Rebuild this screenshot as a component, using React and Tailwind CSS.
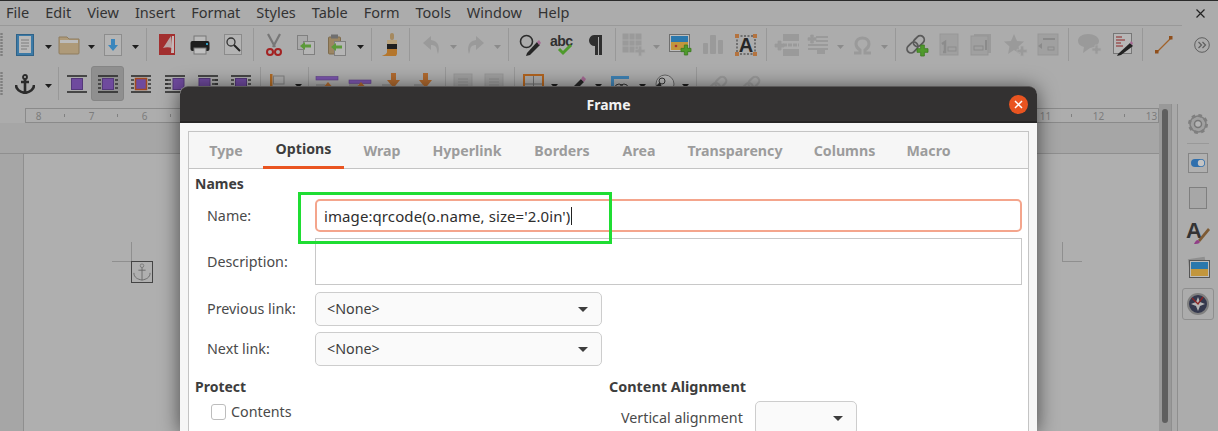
const menus = ["File", "Edit", "View", "Insert", "Format", "Styles", "Table", "Form", "Tools", "Window", "Help"];
// the middle of the ruler sits behind the dialog
const rulerNums = [8, 7, 6, "", "", "", "", "", "", "", "", "", "", "", "", "", "", "", "", 11, 12, 13];
const tabs = [
  { label: "Type", w: "w-[58px]" },
  { label: "Options", w: "w-[81px]", active: true },
  { label: "Wrap", w: "w-[60px]" },
  { label: "Hyperlink", w: "w-[94px]" },
  { label: "Borders", w: "w-[80px]" },
  { label: "Area", w: "w-[58px]" },
  { label: "Transparency", w: "w-[118px]" },
  { label: "Columns", w: "w-[85px]" },
  { label: "Macro", w: "w-[67px]" },
];

const G = "#9a9a9a"; // disabled icon grey

function Ico({ w = 24, h = 24, children }) {
  return (
    <svg width={w} height={h} viewBox={`0 0 ${w} ${h}`} className="block shrink-0 overflow-visible">
      {children}
    </svg>
  );
}

function Slot({ w, children, className = "" }) {
  return <div className={`${w} h-full shrink-0 flex items-center justify-center ${className}`}>{children}</div>;
}

function Arrow({ w, off }) {
  return (
    <Slot w={w} className="pt-[4px]">
      <Ico w={7} h={4}>
        <path d="M0 0h7L3.500 4z" fill={off ? "#8b8b8b" : "#1d1d1d"} />
      </Ico>
    </Slot>
  );
}

function Sep({ w, h = "h-[33px]" }) {
  return (
    <Slot w={w}>
      <div className={`w-px ${h} bg-[#989898]`} />
    </Slot>
  );
}

function Grip() {
  return (
    <div className="w-[9px] h-full shrink-0 flex items-center">
      <Ico w={3} h={24}>
        <line x1="1.500" y1="0" x2="1.500" y2="24" stroke="#7f7f7f" strokeWidth="2.400" strokeDasharray="2 1" />
      </Ico>
    </div>
  );
}

function Plus({ x, y, s = 9, c = "#4f9a2c", b = "#3b7a20" }) {
  const t = s / 3;
  const d = `M${x + t} ${y}h${t}v${t}h${t}v${t}h${-t}v${t}h${-t}v${-t}h${-t}v${-t}h${t}z`;
  return <path d={d} fill={c} stroke={b} strokeWidth="0.800" />;
}

function Chain({ c, sw = 1.800 }) {
  return (
    <g transform="rotate(-45 10 11)" fill="none" stroke={c} strokeWidth={sw}>
      <rect x="-1" y="7" width="12" height="8" rx="4" />
      <rect x="8" y="7" width="12" height="8" rx="4" />
    </g>
  );
}

const NewDoc = () => (
  <Ico w={18} h={22}>
    <rect x="0.500" y="0.500" width="17" height="21" fill="#3c7aa6" stroke="#2f6288" />
    <rect x="3" y="2" width="12" height="17" fill="#b9b9b9" />
    <path d="M5 6h8M5 9h8M5 12h8M5 15h6" stroke="#7d7d7d" />
  </Ico>
);
const Folder = () => (
  <Ico w={22} h={21}>
    <path d="M1 3h8l2 2h10v14a1 1 0 0 1-1 1H2a1 1 0 0 1-1-1z" fill="#ae9a79" stroke="#8f7d5f" />
    <path d="M2 6h18v3H2z" fill="#bcbcbc" />
  </Ico>
);
const Save = () => (
  <Ico w={18} h={22}>
    <rect x="0.500" y="0.500" width="17" height="21" fill="#b4b4b4" stroke="#8d8d8d" />
    <path d="M7 5h4v6h3l-5 6-5-6h3z" fill="#3b86bc" />
  </Ico>
);
const Pdf = () => (
  <Ico w={16} h={21}>
    <rect width="16" height="21" fill="#a22f2f" />
    <path d="M12 2c-3 4-5 8-8 12 3-1 6-1 9 0z" fill="#b9a5a5" />
    <path d="M13 2h2v17h-3z" fill="#c4b8b8" />
  </Ico>
);
const Printer = () => (
  <Ico w={20} h={20}>
    <rect x="4" y="1" width="12" height="8" fill="#b9b9b9" stroke="#777" />
    <rect x="0.500" y="6" width="19" height="10" rx="2" fill="#1f1f1f" />
    <rect x="16" y="8" width="2" height="2" fill="#2e9bc0" />
    <rect x="4" y="13" width="12" height="6" fill="#c0c0c0" stroke="#777" />
  </Ico>
);
const Preview = () => (
  <Ico w={18} h={21}>
    <rect x="0.500" y="0.500" width="17" height="20" fill="#b3b3b3" stroke="#8b8b8b" />
    <circle cx="7" cy="8" r="4" fill="none" stroke="#333" strokeWidth="1.300" />
    <path d="M10 11l6 6" stroke="#222" strokeWidth="2" />
  </Ico>
);
const Cut = () => (
  <Ico w={16} h={22}>
    <path d="M2 0l7 13M14 0L7 13" stroke="#777" strokeWidth="2.200" />
    <circle cx="4" cy="18" r="3" fill="none" stroke="#a32222" strokeWidth="2" />
    <circle cx="12" cy="18" r="3" fill="none" stroke="#a32222" strokeWidth="2" />
  </Ico>
);
const CopyI = () => (
  <Ico w={18} h={20}>
    <rect x="0.500" y="0.500" width="10" height="14" fill="#a9a9a9" stroke="#808080" />
    <rect x="6.500" y="6.500" width="11" height="13" fill="#b5b5b5" stroke="#808080" />
    <path d="M3 11l5-4v2.500h6v3H8V15z" fill="#5c9a3a" />
  </Ico>
);
const Paste = () => (
  <Ico w={18} h={22}>
    <rect x="0.500" y="3" width="12" height="17" rx="1" fill="#9c8662" stroke="#7e6c4e" />
    <rect x="3" y="0.500" width="7" height="4" fill="#6f6f6f" />
    <rect x="6.500" y="7.500" width="11" height="14" fill="#b5b5b5" stroke="#808080" />
    <path d="M3 13l5-4v2.500h6v3H8V17z" fill="#5c9a3a" />
  </Ico>
);
const Brush = () => (
  <Ico w={18} h={24}>
    <rect x="8" y="0" width="4" height="7" rx="2" fill="#a5895f" />
    <rect x="5" y="7" width="10" height="4" fill="#b8a27c" />
    <rect x="5" y="11" width="10" height="5" fill="#1f1f1f" />
    <path d="M5 16h10v5l-1 2H0c2-1 5-2 5-4z" fill="#b4762c" />
  </Ico>
);
const Undo = () => (
  <Ico w={17} h={18}>
    <path d="M8 0L0 7l8 7V9c4 0 6 2 6 6l1 3c2-6 1-13-7-14z" fill={G} />
  </Ico>
);
const Redo = () => (
  <Ico w={17} h={18}>
    <path d="M9 0l8 7-8 7V9c-4 0-6 2-6 6l-1 3C0 12 1 5 9 4z" fill={G} />
  </Ico>
);
const Find = () => (
  <Ico w={22} h={22}>
    <circle cx="7.500" cy="7.500" r="6" fill="none" stroke="#2c2c2c" strokeWidth="1.600" />
    <path d="M8 19l10-11 3 3-10 10-4 1z" fill="#262626" />
    <path d="M18 8l2-2 2 3-2 2z" fill="#a66a94" />
  </Ico>
);
const Abc = () => (
  <div className="relative w-[24px] h-[22px] font-['Liberation_Sans',sans-serif] font-bold text-[14px] leading-[14px] tracking-[-0.5px] text-[#2f2f2f]">
    abc
    <div className="absolute left-0 top-0">
      <Ico w={24} h={22}>
        <path d="M9 15l4 4 8-8" fill="none" stroke="#4f9a2c" strokeWidth="3" />
      </Ico>
    </div>
  </div>
);
const Pilcrow = () => (
  <Ico w={14} h={20}>
    <path d="M6 0h8v20h-3V2H10v18H7v-9a5.500 5.500 0 0 1-1-11z" fill="#2f2f2f" />
  </Ico>
);
const TableI = () => (
  <Ico w={24} h={23}>
    <rect x="0.500" y="0.500" width="19" height="19" fill={G} />
    <path d="M7 0v20M13 0v20M0 7h20M0 13h20" stroke="#a9a9a9" />
    <Plus x={13} y={13} s={10} c={G} b="#a9a9a9" />
  </Ico>
);
const ImageI = () => (
  <Ico w={22} h={21}>
    <rect x="0.500" y="0.500" width="20" height="17" fill="#bdbdbd" stroke="#6f6f6f" />
    <rect x="2" y="2" width="17" height="6" fill="#2b78ad" />
    <rect x="2" y="8" width="17" height="8" fill="#c2963d" />
    <circle cx="7" cy="12" r="1.300" fill="#a33" />
    <Plus x={12} y={11} s={10} />
  </Ico>
);
const Chart = () => (
  <Ico w={20} h={19}>
    <rect y="8" width="5" height="11" rx="1" fill={G} />
    <rect x="7" y="0" width="6" height="19" rx="1" fill={G} />
    <rect x="15" y="5" width="5" height="14" rx="1" fill={G} />
  </Ico>
);
const TextBox = () => (
  <div className="relative w-[22px] h-[22px] flex items-center justify-center font-['Liberation_Sans',sans-serif] font-bold text-[20px] leading-none text-[#262626]">
    A
    <div className="absolute left-0 top-0">
      <Ico w={22} h={22}>
        <rect x="2" y="2" width="18" height="18" fill="none" stroke="#333" strokeDasharray="2 1.500" />
        {[[0, 0], [18, 0], [0, 18], [18, 18]].map(([x, y]) => (
          <rect key={`${x}${y}`} x={x} y={y} width="4" height="4" fill="#b4733f" />
        ))}
      </Ico>
    </div>
  </div>
);
const Field1 = () => (
  <Ico w={24} h={22}>
    <rect x="8" y="0" width="16" height="7" fill={G} />
    <rect x="8" y="15" width="16" height="7" fill={G} />
    <path d="M8 11h16" stroke={G} strokeWidth="3" strokeDasharray="4 1" />
    <Plus x={0} y={7} s={9} c={G} b={G} />
  </Ico>
);
const Field2 = () => (
  <Ico w={20} h={20}>
    <path d="M8 2h12M8 6h12M0 10h20M0 14h20" stroke={G} strokeWidth="2" />
    <rect x="9" y="13" width="8" height="6" fill={G} />
    <Plus x={0} y={0} s={8} c={G} b={G} />
  </Ico>
);
const Omega = () => (
  <Ico w={19} h={18}>
    <path d="M1 17h6v-3C4 12 3 10 3 8c0-4 3-6 6.500-6S16 4 16 8c0 2-1 4-4 6v3h6" fill="none" stroke={G} strokeWidth="3" />
  </Ico>
);
const LinkI = () => (
  <Ico w={22} h={23}>
    <Chain c="#5a5a5a" />
    <Plus x={11} y={12} s={11} />
  </Ico>
);
const Foot = () => (
  <Ico w={18} h={21}>
    <rect width="18" height="21" fill="#a0a0a0" stroke="#979797" />
    <path d="M2 10l3-2v10H3" fill="none" stroke="#8c8c8c" strokeWidth="2.500" />
    <rect x="8" y="13" width="8" height="4" fill="none" stroke="#8c8c8c" />
  </Ico>
);
const End = () => (
  <Ico w={20} h={21}>
    <rect x="3" y="0" width="17" height="19" fill="#9a9a9a" />
    <rect y="2" width="17" height="19" fill="#a0a0a0" stroke="#959595" />
    <rect x="3" y="12" width="9" height="4" fill="none" stroke="#8a8a8a" />
    <path d="M15 6v10" stroke="#8a8a8a" strokeWidth="2" />
  </Ico>
);
const Star = () => (
  <Ico w={23} h={22}>
    <path d="M10 0l3 7 7 .5-5.500 5L16 20l-6-4-6 4 1.500-7.500L0 7.500 7 7z" fill={G} />
    <Plus x={13} y={12} s={10} c={G} b="#a9a9a9" />
  </Ico>
);
const CrossRef = () => (
  <Ico w={20} h={21}>
    <rect width="20" height="21" fill="#a0a0a0" stroke="#979797" />
    <path d="M5 5h12" stroke="#8a8a8a" strokeWidth="2" />
    <path d="M0 12l4-3v6z" fill="#8a8a8a" />
    <rect x="10" y="13" width="6" height="3" fill="none" stroke="#8a8a8a" />
  </Ico>
);
const Comment = () => (
  <Ico w={23} h={21}>
    <path d="M10 0c6 0 11 3 11 7 0 3-3 6-9 7l-7 5 1-6C2 12 0 10 0 7c0-4 4-7 10-7z" fill={G} />
    <Plus x={14} y={11} s={9} c={G} b="#a9a9a9" />
  </Ico>
);
const Track = () => (
  <Ico w={20} h={23}>
    <rect x="0.500" y="0.500" width="18" height="20" fill="#b7b7b7" stroke="#777" />
    <path d="M3 4h6M3 7h9M3 10h5M3 13h7" stroke="#8c2323" />
    <path d="M5 21l12-11 3 3L8 22l-4 1z" fill="#222" />
    <path d="M17 10l1-2 2 2-1 2z" fill="#a66a94" />
  </Ico>
);
const LineI = () => (
  <Ico w={18} h={18}>
    <path d="M2 16L16 2" stroke="#a0622a" strokeWidth="1.300" />
    <rect x="0" y="14" width="3.500" height="3.500" fill="#8f4f1c" />
    <rect x="14" y="0" width="3.500" height="3.500" fill="#8f4f1c" />
  </Ico>
);
const More = () => (
  <Ico w={16} h={16}>
    <circle cx="8" cy="8" r="7.300" fill="none" stroke="#5f5f5f" />
    <path d="M4.500 5l3 3-3 3M8.500 5l3 3-3 3" fill="none" stroke="#5f5f5f" strokeWidth="1.200" />
  </Ico>
);
const AnchorI = ({ s = 20, c = "#2b2b2b", sw = 2.600 }) => (
  <svg width={s} height={s} viewBox="0 0 20 20" className="block shrink-0">
    <circle cx="10" cy="3" r="2" fill="none" stroke={c} strokeWidth={sw * 0.7} />
    <path d="M10 5v14M6 8h8M1 11c0 5 4 7 9 8 5-1 9-3 9-8" fill="none" stroke={c} strokeWidth={sw} />
  </svg>
);
const Wrap = ({ v }) => {
  const lines = { left: v !== "none" && v !== "left", right: v !== "none" && v !== "right" };
  const sq = v === "right" ? 8 : v === "left" ? 1 : 4.500;
  return (
    <Ico w={20} h={18}>
      <path d="M0 1h20M0 17h20" stroke="#252525" strokeWidth="1.600" />
      {lines.left && <path d="M0 5h3M0 9h3M0 13h3" stroke="#333" strokeWidth="1.400" />}
      {lines.right && <path d="M17 5h3M17 9h3M17 13h3" stroke="#333" strokeWidth="1.400" />}
      {v === "right" && <path d="M0 5h6M0 9h6M0 13h6" stroke="#333" strokeWidth="1.400" />}
      {v === "left" && <path d="M14 5h6M14 9h6M14 13h6" stroke="#333" strokeWidth="1.400" />}
      <rect x={sq} y="3.500" width="11" height="11" fill="#6f4a9e" stroke={v === "box" ? "#a2481f" : "#54387a"} strokeWidth={v === "box" ? 1.500 : 1} />
    </Ico>
  );
};
const FlagI = () => (
  <Ico w={15} h={20}>
    <rect x="0" y="0" width="2.500" height="20" fill="#b06a24" />
    <rect x="3.500" y="2" width="10.500" height="8" fill="none" stroke="#7f7f7f" />
  </Ico>
);
const Align = ({ up, bar }) => (
  <Ico w={22} h={22}>
    <rect x="0" y={bar} width="22" height="3.500" fill="#7b55ad" stroke="#5f4089" strokeWidth="0.600" />
    <path d="M0 12h9M0 15h9" stroke="#7f7f7f" />
    {up ? <path d="M12 9l7 8h-14z" fill="#b06a2f" /> : <path d="M9 0h5v7h4l-6.500 8L5 7h4z" fill="#b06a2f" />}
  </Ico>
);
const DocOff = () => (
  <Ico w={18} h={20}>
    <rect width="18" height="20" fill="#a0a0a0" stroke="#979797" />
    <path d="M4 5h10M4 8h10M4 11h10" stroke="#8e8e8e" />
  </Ico>
);
const BorderI = () => (
  <Ico w={21} h={20}>
    <rect x="1" y="1" width="19" height="20" fill="none" stroke="#b2641f" strokeWidth="2" />
    <path d="M10.500 2v18M2 10h17" stroke="#6f6f6f" />
  </Ico>
);
const Pencil = () => (
  <Ico w={18} h={20}>
    <path d="M1 17L13 5l3 3L4 20H0z" fill="#262626" />
    <path d="M13 5l2-3 3 3-2 3z" fill="#a66a94" />
  </Ico>
);
const ShadowI = () => (
  <Ico w={20} h={20}>
    <path d="M1 20V2h18v3H4v15z" fill="#3f83b5" />
    <circle cx="9" cy="14" r="4" fill="none" stroke="#333" />
    <circle cx="14" cy="14" r="4" fill="none" stroke="#333" />
  </Ico>
);
const Gallery = () => (
  <Ico w={20} h={20}>
    <circle cx="11" cy="10" r="9" fill="#b9b9b9" stroke="#666" />
    <path d="M0 14l6-6 3 8z" fill="#2a2a2a" />
    <circle cx="8" cy="7" r="3" fill="none" stroke="#333" />
  </Ico>
);
const ChainOff = () => (
  <Ico w={20} h={20}>
    <Chain c={G} sw={2.200} />
  </Ico>
);

const Gear = () => (
  <Ico w={22} h={22}>
    <circle cx="11" cy="11" r="8" fill="#a0a0a0" stroke="#7f7f7f" strokeWidth="1.500" />
    <circle cx="11" cy="11" r="8.500" fill="none" stroke="#7f7f7f" strokeWidth="3" strokeDasharray="3.500 3.200" />
    <circle cx="11" cy="11" r="3.500" fill="#b4b4b4" stroke="#777" strokeWidth="1.500" />
  </Ico>
);
const Toggle = () => (
  <Ico w={20} h={20}>
    <rect x="0.500" y="0.500" width="19" height="19" fill="#b0b0b0" stroke="#858585" />
    <rect x="3" y="6" width="14" height="8" rx="4" fill="#2f6fad" />
    <circle cx="13" cy="10" r="3.200" fill="#c4c4c4" />
  </Ico>
);
const Square = () => <div className="w-[18px] h-[22px] bg-[#a7a7a7] border border-[#7f7f7f]" />;
const StyleA = () => (
  <div className="relative w-[24px] h-[24px] font-['Liberation_Sans',sans-serif] font-bold text-[22px] leading-[20px] text-[#333]">
    A
    <div className="absolute left-0 top-0">
      <Ico w={24} h={24}>
        <path d="M22 7L12 19l2 2L24 9z" fill="#7d5a33" />
        <path d="M12 19c-2 0-3 2-4 4 2 0 5 0 6-2z" fill="#913f87" />
      </Ico>
    </div>
  </div>
);
const Photos = () => (
  <Ico w={23} h={21}>
    <rect x="2" y="1" width="17" height="18" fill="#8f8f8f" transform="rotate(-8 10 10)" />
    <rect x="2.500" y="3.500" width="20" height="17" fill="#bdbdbd" stroke="#555" />
    <rect x="4" y="5" width="17" height="7" fill="#2b78ad" />
    <rect x="4" y="12" width="17" height="7" fill="#c2963d" />
  </Ico>
);
const Compass = () => (
  <Ico w={22} h={22}>
    <circle cx="11" cy="11" r="10" fill="#34384d" stroke="#7f7f7f" strokeWidth="2" />
    <path d="M11 4l2 5 5 2-5 2-2 5-2-5-5-2 5-2z" fill="#b5b5b5" />
    <path d="M5 5l6 6 5-7" fill="none" stroke="#8c2323" strokeWidth="1.300" />
  </Ico>
);

function Toolbar1() {
  return (
    <div className="h-[37px] flex items-center">
      <Grip />
      <Slot w="w-[32px]"><NewDoc /></Slot>
      <Arrow w="w-[14px]" />
      <Slot w="w-[28px]"><Folder /></Slot>
      <Arrow w="w-[16px]" />
      <Slot w="w-[28px]"><Save /></Slot>
      <Arrow w="w-[16px]" />
      <Sep w="w-[6px]" />
      <Slot w="w-[36px]"><Pdf /></Slot>
      <Slot w="w-[30px]"><Printer /></Slot>
      <Slot w="w-[36px]"><Preview /></Slot>
      <Sep w="w-[4px]" />
      <Slot w="w-[38px]"><Cut /></Slot>
      <Slot w="w-[26px]"><CopyI /></Slot>
      <Slot w="w-[36px]"><Paste /></Slot>
      <Arrow w="w-[10px]" />
      <Sep w="w-[12px]" />
      <Slot w="w-[28px]"><Brush /></Slot>
      <Sep w="w-[8px]" />
      <Slot w="w-[36px]"><Undo /></Slot>
      <Arrow w="w-[8px]" off />
      <Slot w="w-[36px]"><Redo /></Slot>
      <Arrow w="w-[8px]" off />
      <Sep w="w-[14px]" />
      <Slot w="w-[30px]"><Find /></Slot>
      <Slot w="w-[34px]"><Abc /></Slot>
      <Slot w="w-[32px]"><Pilcrow /></Slot>
      <Sep w="w-[8px]" />
      <Slot w="w-[30px]"><TableI /></Slot>
      <Arrow w="w-[14px]" off />
      <Slot w="w-[34px]"><ImageI /></Slot>
      <Slot w="w-[32px]"><Chart /></Slot>
      <Slot w="w-[34px]"><TextBox /></Slot>
      <Sep w="w-[6px]" />
      <Slot w="w-[36px]"><Field1 /></Slot>
      <Slot w="w-[26px]"><Field2 /></Slot>
      <Arrow w="w-[18px]" off />
      <Slot w="w-[26px]"><Omega /></Slot>
      <Arrow w="w-[18px]" off />
      <Sep w="w-[4px]" />
      <Slot w="w-[40px]"><LinkI /></Slot>
      <Slot w="w-[24px]"><Foot /></Slot>
      <Slot w="w-[40px]"><End /></Slot>
      <Slot w="w-[28px]"><Star /></Slot>
      <Slot w="w-[38px]"><CrossRef /></Slot>
      <Sep w="w-[2px]" />
      <Slot w="w-[40px]"><Comment /></Slot>
      <Slot w="w-[28px]"><Track /></Slot>
      <Sep w="w-[10px]" />
      <Slot w="w-[34px]"><LineI /></Slot>
      <Slot w="w-[42px]"><More /></Slot>
    </div>
  );
}

function Toolbar2() {
  return (
    <div className="h-[41px] flex items-center">
      <Grip />
      <Slot w="w-[32px]"><AnchorI /></Slot>
      <Arrow w="w-[14px]" />
      <Sep w="w-[6px]" />
      <Slot w="w-[32px]"><Wrap v="none" /></Slot>
      <Slot w="w-[33px]" className="-ml-[2px] !h-[35px] rounded-[3px] bg-[#8f8f8f] border border-[#858585]"><Wrap v="both" /></Slot>
      <Slot w="w-[34px]"><Wrap v="box" /></Slot>
      <Slot w="w-[33px]"><Wrap v="right" /></Slot>
      <Slot w="w-[33px]"><Wrap v="left" /></Slot>
      <Slot w="w-[33px]"><Wrap v="both" /></Slot>
      <Sep w="w-[6px]" />
      <Slot w="w-[29px]"><FlagI /></Slot>
      <Arrow w="w-[12px]" />
      <Sep w="w-[8px]" />
      <Slot w="w-[30px]"><Align up bar={3.500} /></Slot>
      <Slot w="w-[35px]"><Align up bar={7} /></Slot>
      <Slot w="w-[31px]"><Align bar={17} /></Slot>
      <Slot w="w-[34px]"><Align bar={19} /></Slot>
      <Sep w="w-[6px]" />
      <Slot w="w-[30px]"><DocOff /></Slot>
      <Slot w="w-[32px]"><DocOff /></Slot>
      <Sep w="w-[8px]" />
      <Slot w="w-[30px]"><BorderI /></Slot>
      <Arrow w="w-[13px]" />
      <Slot w="w-[31px]"><Pencil /></Slot>
      <Arrow w="w-[12px]" />
      <Slot w="w-[32px]"><ShadowI /></Slot>
      <Arrow w="w-[12px]" />
      <Slot w="w-[32px]"><Gallery /></Slot>
      <Arrow w="w-[11px]" />
      <Sep w="w-[10px]" />
      <Slot w="w-[34px]"><ChainOff /></Slot>
      <Slot w="w-[32px]"><ChainOff /></Slot>
    </div>
  );
}

function Ruler() {
  return (
    <div className="mt-[4px] ml-[25px] h-[15px] shrink-0 border border-[#8a8a8a] overflow-hidden flex bg-[#adadad]">
      <div className="flex -ml-[14px] shrink-0">
        {rulerNums.map((n, i) => (
          <div key={i} className="relative w-[53px] shrink-0 flex items-center justify-center text-[10px] leading-none text-[#7c7c7c]">
            {n}
            <div className="absolute right-0 top-[5px] w-px h-[3px] bg-[#808080]" />
          </div>
        ))}
      </div>
    </div>
  );
}

function CropMark({ right }) {
  return <div className={`w-[20px] h-[20px] border-b border-[#8f8f8f] ${right ? "border-l" : "border-r"}`} />;
}

function Combo({ w, text }) {
  return (
    <div className={`${w} h-[34px] shrink-0 rounded-[5px] border border-[#cdcdcd] bg-[#fafafa] flex items-center justify-between pl-[11px] pr-[13px] text-[#3d3d3d]`}>
      <span>{text}</span>
      <Ico w={10} h={5}>
        <path d="M0 0h10L5 5z" fill="#3d3d3d" />
      </Ico>
    </div>
  );
}

function Dialog() {
  return (
    <div className="absolute left-[180px] top-[85px] w-[857px] h-[345px] shadow-[0_2px_20px_rgba(0,0,0,0.6)] rounded-t-[8px] bg-[#f6f6f6] flex flex-col">
      <div className="relative h-[37px] shrink-0 rounded-t-[8px] bg-[#333131] border-t border-[#5a5858] border-b-2 border-b-[#262525] flex items-center justify-center font-bold text-[14px] text-[#f2f2f2]">
        Frame
        <div className="absolute right-[9px] top-[8px] w-[19px] h-[19px] rounded-full bg-[#e95420] flex items-center justify-center">
          <Ico w={9} h={9}>
            <path d="M1 1l7 7M8 1L1 8" stroke="#fff" strokeWidth="1.500" />
          </Ico>
        </div>
      </div>
      <div className="flex-1 min-h-0 overflow-hidden px-[8px] pt-[8px]">
        <div className="relative h-[320px] border border-[#c4c4c4] border-b-0 bg-white">
          <div className="h-[37px] bg-[#f6f6f6] border-b border-[#c4c4c4] pl-[8px] flex gap-[8px] text-[14.200px] font-bold">
            {tabs.map((t) => (
              <div key={t.label} className={`${t.w} shrink-0 h-[37px] flex items-center justify-center ${t.active ? "text-[#3d3d3d] border-b-[3px] border-[#e95420]" : "text-[#9c9c9c]"}`}>
                {t.label}
              </div>
            ))}
          </div>
          <div className="px-[6px] pt-[6px] text-[14.300px] leading-[18px] text-[#4a4a4a]">
            <div className="h-[18px] font-bold text-[14px] text-[#3d3d3d] flex items-center">Names</div>
            <div className="ml-[12px] mt-[6px] flex items-center">
              <div className="w-[108px]">Name:</div>
              <div className="w-[707px] h-[33px] rounded-[5px] border-2 border-[#f4a58c] bg-white flex items-center pl-[7px] text-[15px] tracking-[0.09px] text-[#2e2e2e]">
                <span>image:qrcode(o.name, size='2.0in')</span>
                <div className="w-px h-[18px] bg-[#222] ml-px" />
              </div>
            </div>
            <div className="ml-[12px] mt-[6px] flex items-center">
              <div className="w-[108px]">Description:</div>
              <div className="w-[707px] h-[47px] border border-[#c8c8c8] bg-white" />
            </div>
            <div className="ml-[12px] mt-[7px] flex items-center">
              <div className="w-[108px]">Previous link:</div>
              <Combo w="w-[287px]" text="<None>" />
            </div>
            <div className="ml-[12px] mt-[6px] flex items-center">
              <div className="w-[108px]">Next link:</div>
              <Combo w="w-[287px]" text="<None>" />
            </div>
            <div className="mt-[12px] grid grid-cols-[414px_1fr]">
              <div>
                <div className="h-[18px] font-bold text-[14px] text-[#3d3d3d] flex items-center">Protect</div>
                <div className="mt-[8px] ml-[16px] h-[16px] flex items-center gap-[5px]">
                  <div className="w-[15px] h-[16px] rounded-[3px] border border-[#bdbdbd] bg-white" />
                  Contents
                </div>
              </div>
              <div>
                <div className="h-[18px] font-bold text-[14.400px] text-[#3d3d3d] flex items-center">Content Alignment</div>
                <div className="ml-[12px] mt-[5px] flex items-center">
                  <div className="w-[134px]">Vertical alignment</div>
                  <Combo w="w-[102px]" text="" />
                </div>
              </div>
            </div>
          </div>
          <div className="absolute left-[109px] top-[60px] w-[314px] h-[52px] border-[3px] border-[#1fdd33]" />
        </div>
      </div>
    </div>
  );
}

export default function App() {
  return (
    <div className="relative w-[1218px] h-[431px] overflow-hidden bg-[#acacac] border-t border-[#2a2a2a] flex flex-col font-['Noto_Sans','Open_Sans',sans-serif]">
      <div className="h-[25px] shrink-0 flex">
        <div className="w-[1182px] border-b border-[#999] flex items-center gap-[16px] pl-[6px] text-[14.500px] text-[#333]">
          {menus.map((m) => (
            <span key={m}>{m}</span>
          ))}
        </div>
        <div className="flex-1 flex items-center justify-center pl-[1px]">
          <Ico w={9} h={9}>
            <path d="M.5.5l8 8M8.500.5l-8 8" stroke="#222" strokeWidth="1.200" />
          </Ico>
        </div>
      </div>
      <Toolbar1 />
      <Toolbar2 />
      <div className="flex-1 min-h-0 flex">
        <div className="w-[1159px] shrink-0 flex flex-col">
          <Ruler />
          <div className="h-[31px] shrink-0 bg-[#a6a6a6] border-b border-[#8f8f8f]" />
          <div className="flex-1 bg-[#a6a6a6] pl-[23px]">
            <div className="h-full bg-[#afafaf] border-l border-[#8f8f8f] pt-[88px] pl-[88px] pr-[77px] flex justify-between">
              <div>
                <CropMark />
                <div className="-mt-px ml-[19px] w-[22px] h-[22px] border border-[#444] flex items-center justify-center">
                  <AnchorI s={18} c="#666" sw={1} />
                </div>
              </div>
              <CropMark right />
            </div>
          </div>
        </div>
        <div className="w-[12px] shrink-0 bg-[#999] py-[5px] flex justify-center">
          <div className="w-[6px] h-[314px] rounded-full bg-[#5f5f5f]" />
        </div>
        <div className="w-[6px] shrink-0 border-l border-[#8f8f8f] bg-[#a9a9a9]" />
        <div className="flex-1 border-l border-[#8f8f8f] flex flex-col items-center pt-[9px]">
          <Gear />
          <div className="mt-[8px] w-[22px] h-px bg-[#999]" />
          <div className="mt-[9px]"><Toggle /></div>
          <div className="mt-[14px]"><Square /></div>
          <div className="mt-[12px]"><StyleA /></div>
          <div className="mt-[12px]"><Photos /></div>
          <div className="mt-[10px] w-[32px] h-[32px] rounded-[3px] border border-[#8f8f8f] flex items-center justify-center"><Compass /></div>
        </div>
      </div>
      <Dialog />
    </div>
  );
}
